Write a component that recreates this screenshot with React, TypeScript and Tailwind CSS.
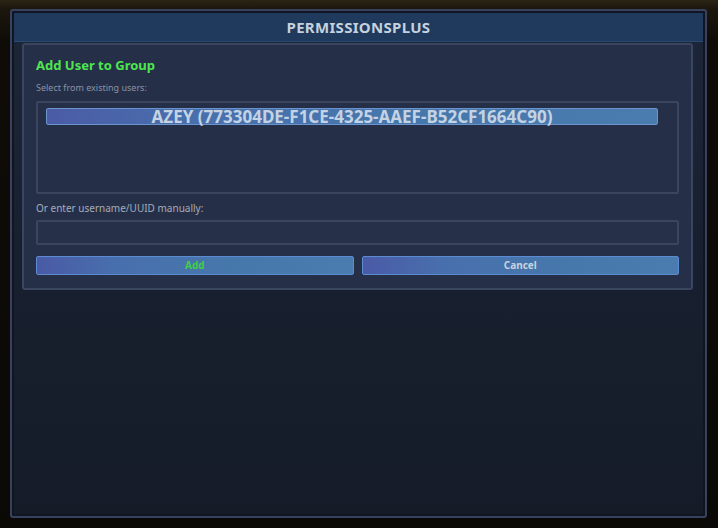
export default function App() {
  const font = { fontFamily: "'Noto Sans', 'Open Sans', sans-serif" };

  return (
    <div
      className="w-[718px] h-[528px] overflow-hidden bg-[#0e0b07] bg-[linear-gradient(180deg,#2b2516_0px,#1c170d_9px,#0f0c08_40px,#0b0906_100%)] pt-[9px] pl-[10px] pr-[11px] pb-[10px]"
      style={font}
    >
      {/* outer frame */}
      <div className="h-full rounded-[3px] border-2 border-[#38425e] bg-[#0f1521] p-[2px]">
        <div className="flex h-full flex-col bg-[linear-gradient(180deg,#1d2638_0%,#182030_45%,#151c28_100%)]">
          {/* header */}
          <div className="flex h-[29px] shrink-0 items-center justify-center border-b border-[#2b4a72] bg-[#1f3a5d]">
            <span className="text-[15px] font-bold tracking-[0.3px] text-[#c5d2de]">PERMISSIONSPLUS</span>
          </div>

          {/* dialog panel */}
          <div className="ml-[8px] mr-[10px] mt-px rounded-[3px] border-2 border-[#3a4660] bg-[#262f48] px-[12px] pt-[11px] pb-[13px]">
            <div className="text-[13px] font-bold leading-[18px] text-[#4ee650]">Add User to Group</div>

            <div className="mt-[8px] text-[9px] leading-[12px] text-[#8a93a6]">Select from existing users:</div>

            <div className="mt-[7px] h-[93px] rounded-[2px] border-2 border-[#3b465e] bg-[#262f48] px-[8px] pt-[5px]">
              <div className="mr-[11px] flex h-[17px] items-center justify-center rounded-[2px] border border-[#6b94cf] bg-[linear-gradient(90deg,#4b5ba6_0%,#4870ad_25%,#4677ab_60%,#4a7cb0_100%)]">
                <span className="text-[17px] font-bold leading-none text-[#c4d3e3]">
                  AZEY (773304DE-F1CE-4325-AAEF-B52CF1664C90)
                </span>
              </div>
            </div>

            <div className="mt-[7px] text-[10px] leading-[14px] text-[#a4acba]">Or enter username/UUID manually:</div>

            <div className="mt-[5px] h-[25px] rounded-[2px] border-2 border-[#3b465e] bg-[#273049]" />

            <div className="mt-[11px] flex gap-[8px]">
              <div className="flex h-[19px] flex-1 items-center justify-center rounded-[2px] border border-[#5b8bd0] bg-[linear-gradient(90deg,#4a5aa6_0%,#486fad_25%,#4677ab_60%,#4a7cb0_100%)]">
                <span className="text-[10px] font-bold text-[#3fcf4a]">Add</span>
              </div>
              <div className="flex h-[19px] flex-1 items-center justify-center rounded-[2px] border border-[#5b8bd0] bg-[linear-gradient(90deg,#4a5aa6_0%,#486fad_25%,#4677ab_60%,#4a7cb0_100%)]">
                <span className="text-[10px] font-bold text-[#c9d2de]">Cancel</span>
              </div>
            </div>
          </div>
        </div>
      </div>
    </div>
  );
}
